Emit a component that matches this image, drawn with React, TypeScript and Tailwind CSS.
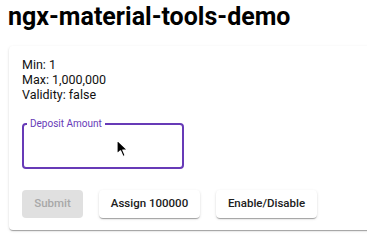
import React from 'react';

// Mouse pointer captured in the screenshot
function Pointer() {
  return (
    <svg width="14" height="20" viewBox="0 0 14 20" className="absolute left-[116px] top-[139px] pointer-events-none">
      <path d="M1 1 L1 15 L4.5 11.8 L7 17.5 L9.2 16.5 L6.8 11 L11.5 11 Z" fill="#000" stroke="#fff" strokeWidth="1.2" strokeLinejoin="round" />
    </svg>
  );
}

function RaisedButton({ label, disabled }: { label: string; disabled?: boolean }) {
  return (
    <button
      disabled={disabled}
      className={
        disabled
          ? 'h-[28px] w-[61px] rounded-[4px] bg-[#e0e0e0] text-[11.5px] font-medium text-[#a8a8a8]'
          : 'h-[28px] w-[101px] rounded-[4px] bg-white text-[11.5px] font-medium text-[#202020] shadow-[0_2px_1px_-1px_rgba(0,0,0,0.2),0_1px_1px_0_rgba(0,0,0,0.14),0_1px_3px_0_rgba(0,0,0,0.12)]'
      }
    >
      {label}
    </button>
  );
}

export default function App() {
  return (
    <div className="relative h-[240px] w-[367px] overflow-hidden bg-white font-['Roboto',sans-serif] text-[#202020]">
      <h1 className="ml-[8px] mt-[2px] text-[25px] font-bold leading-[30px] text-black">
        ngx-material-tools-demo
      </h1>

      <div className="ml-[9px] mt-[14px] w-[400px] rounded-[4px] bg-white pb-[12px] pl-[13px] pt-[11px] shadow-[0_2px_1px_-1px_rgba(0,0,0,0.2),0_1px_1px_0_rgba(0,0,0,0.14),0_1px_3px_0_rgba(0,0,0,0.12)]">
        <div className="text-[12.5px] leading-[15px] text-[#111]">
          <p>Min: 1</p>
          <p>Max: 1,000,000</p>
          <p>Validity: false</p>
        </div>

        <fieldset className="mt-[16px] h-[51px] w-[162px] rounded-[4px] border-2 border-[#673ab7] pl-[3px]">
          <legend className="px-[3px] text-[10px] leading-[12px] text-[#673ab7]">Deposit Amount</legend>
        </fieldset>

        <div className="mt-[21px] flex gap-[16px]">
          <RaisedButton label="Submit" disabled />
          <RaisedButton label="Assign 100000" />
          <RaisedButton label="Enable/Disable" />
        </div>
      </div>

      <Pointer />
    </div>
  );
}
